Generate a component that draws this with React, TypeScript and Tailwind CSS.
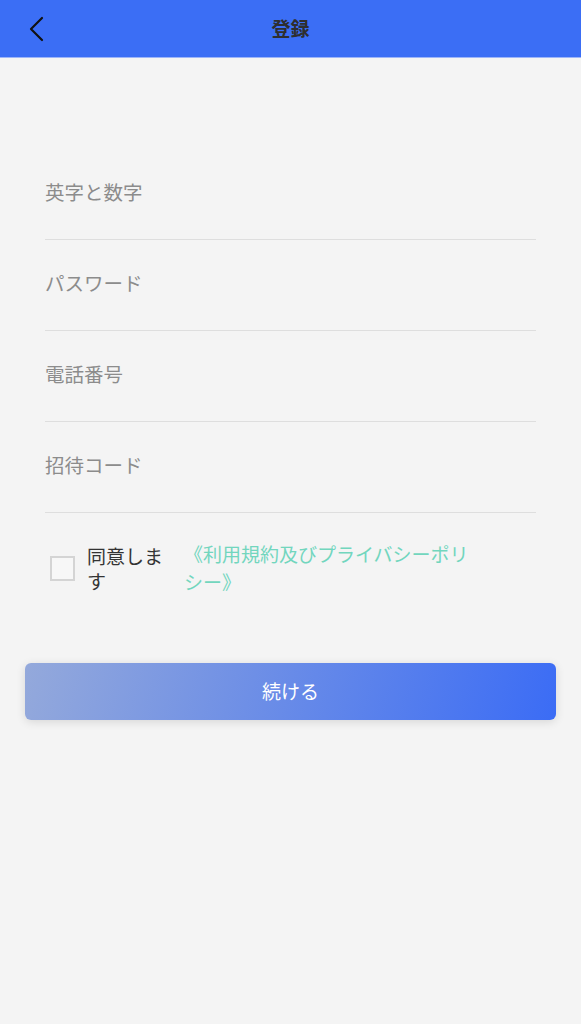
import { useState } from "react";

const fields = ["英字と数字", "パスワード", "電話番号", "招待コード"];

const App = () => {
  const [agreed, setAgreed] = useState(false);

  return (
    <div
      className="min-h-[1024px] w-full bg-[#f4f4f4]"
      style={{ fontFamily: '"Noto Sans CJK JP", "Noto Sans", sans-serif' }}
    >
      {/* Header */}
      <header className="relative flex h-[58px] items-center justify-center border-b border-[#9db5f9] bg-[#3b6ef5]">
        <button className="absolute left-[22px] top-[11px] p-1">
          <svg width="20" height="28" viewBox="0 0 20 28" fill="none">
            <path
              d="M16 3 L5 14 L16 25"
              stroke="#111"
              strokeWidth="2.2"
              strokeLinecap="round"
              strokeLinejoin="round"
            />
          </svg>
        </button>
        <h1 className="text-[19px] font-bold text-[#2e2e2e]">登録</h1>
      </header>

      {/* Form */}
      <div className="px-[45px] pt-[91px]">
        {fields.map((label) => (
          <div
            key={label}
            className="flex h-[91px] items-center border-b border-[#dedede] pb-1"
          >
            <input
              placeholder={label}
              className="w-full bg-transparent text-[19.5px] text-[#333] outline-none placeholder:text-[#8c8c8c]"
            />
          </div>
        ))}

        {/* Agreement */}
        <div className="mt-[27px] flex items-center">
          <button
            onClick={() => setAgreed(!agreed)}
            className="ml-[5px] h-[25px] w-[25px] shrink-0 border-2 border-[#d4d4d4] bg-[#f7f7f7]"
          />
          <span className="ml-[12px] w-[84px] text-[19px] leading-[25px] text-[#333]">
            同意します
          </span>
          <a className="ml-[13px] w-[300px] text-[19px] leading-[28px] text-[#72d6be]">
            《利用規約及びプライバシーポリシー》
          </a>
        </div>
      </div>

      {/* Submit */}
      <div className="px-[25px] pt-[67px]">
        <button className="flex h-[57px] w-full items-center justify-center rounded-[6px] bg-[linear-gradient(105deg,#94a9db,#3b6cf5)] text-[19px] text-white shadow-[0_2px_10px_rgba(0,0,0,0.12)]">
          続ける
        </button>
      </div>
    </div>
  );
};

export default App;
